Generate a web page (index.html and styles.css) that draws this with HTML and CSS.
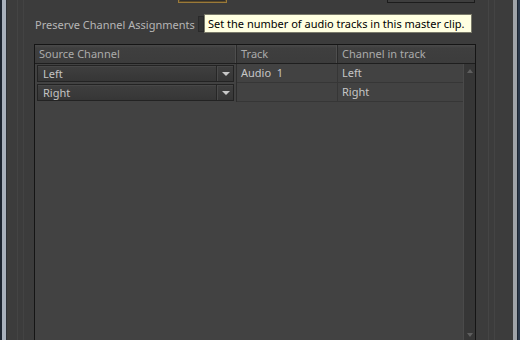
FILE: index.html
```html
<!DOCTYPE html>
<html>
	<head>
		<meta charset="utf-8"/>
		<title>Modify Clip - Audio Channels</title>
		<link rel="stylesheet" href="styles.css">
	</head>
	<body>
		<div class="edgeLeft"></div>
		<div id="dialog">
			<div class="topStrip">
				<div class="numField"></div>
				<div class="topButton"></div>
			</div>
			<div class="optionRow">
				<span class="optionLabel">Preserve Channel Assignments</span>
				<span class="checkBox"></span>
			</div>
			<div class="tooltip">Set the number of audio tracks in this master clip.</div>

			<div id="channelTable">
				<div class="tableHead">
					<div class="headCell">Source Channel</div>
					<div class="headCell">Track</div>
					<div class="headCell last">Channel in track</div>
				</div>
				<div class="tableBody">
					<div class="rows">
						<div class="row">
							<div class="cell srcCell">
								<div class="dropDown"><span>Left</span><span class="ddArrow"></span></div>
							</div>
							<div class="cell">Audio&nbsp; 1</div>
							<div class="cell">Left</div>
						</div>
						<div class="row">
							<div class="cell srcCell">
								<div class="dropDown"><span>Right</span><span class="ddArrow"></span></div>
							</div>
							<div class="cell"></div>
							<div class="cell">Right</div>
						</div>
					</div>
					<div class="scrollBar">
						<span class="sbUp"></span>
						<span class="sbDown"></span>
					</div>
				</div>
			</div>
		</div>
		<div class="edgeRight"></div>
	</body>
</html>
```

FILE: styles.css
```css
/*main layout*/
body{
	margin: 0;
	height: 340px;
	overflow: hidden;
	display: flex;
	background-color: #3c3c3c;
	font-family: "Noto Sans", "Liberation Sans", sans-serif;
	font-size: 11px;
	color: #c4c4c4;
}
.edgeLeft{
	width: 7px;
	background: linear-gradient(to right, #1b2430 0 2px, #a7b0bc 2px 6px, #2c3138 6px 7px);
}
.edgeRight{
	width: 7px;
	background: linear-gradient(to right, #9fa3a8 0 4px, #1c2531 4px 5px, #2c3a4c 5px);
}
#dialog{
	flex: 1;
	position: relative;
	display: flex;
	flex-direction: column;
	padding-left: 27px;
	/*faint panel lines*/
	background:
		linear-gradient(to right, transparent 10px, #444 10px 11px, transparent 11px 16px, #434343 16px 17px, transparent 17px 481px, #454545 481px 482px, transparent 482px 487px, #444 487px 488px, transparent 488px),
		#3c3c3c;
}

/*partly visible controls at the top*/
.topStrip{
	display: flex;
	align-items: flex-end;
	height: 3px;
}
.numField{
	width: 47px;
	height: 18px;
	margin-left: 144px;
	flex-shrink: 0;
	border: 1px solid #9a7a3a;
	background-color: #2e2e2e;
	box-shadow: inset 0 0 0 1px #5a4826;
}
.topButton{
	width: 86px;
	height: 18px;
	margin-left: 160px;
	flex-shrink: 0;
	border: 1px solid #1c1c1c;
	background-color: #3e3e3e;
}

.optionRow{
	display: flex;
	align-items: center;
	height: 20px;
	margin-top: 11px;
	padding-left: 1px;
}
.optionLabel{
	color: #b6b6b6;
	width: 163px;
}
.checkBox{
	width: 4px;
	height: 14px;
	border: 1px solid #2a2a2a;
	background-color: #333;
}
.tooltip{
	position: absolute;
	left: 197px;
	top: 14px;
	width: 263px;
	height: 17px;
	padding-left: 3px;
	border: 1px solid #7a7a6a;
	background-color: #ffffe1;
	color: #000;
	font-size: 11px;
	line-height: 17px;
	white-space: nowrap;
}

/*table*/
#channelTable{
	width: 440px;
	flex: 1;
	margin-top: 10px;
	border: 1px solid #151515;
	border-bottom: none;
	display: flex;
	flex-direction: column;
	background-color: #424242;
}
.tableHead{
	display: grid;
	grid-template-columns: 202px 101px 137px;
	height: 18px;
	border-bottom: 1px solid #1e1e1e;
	background: linear-gradient(#4a4a4a, #3f3f3f 3px, #3c3c3c);
}
.headCell{
	padding-left: 4px;
	line-height: 18px;
	color: #ababab;
	border-right: 1px solid #2a2a2a;
	box-shadow: inset -1px 0 0 #4e4e4e;
}
.headCell.last{
	border-right: none;
	box-shadow: none;
}
.tableBody{
	flex: 1;
	display: flex;
}
.rows{
	flex: 1;
}
.row{
	display: grid;
	grid-template-columns: 202px 101px 125px;
	height: 19px;
}
.cell{
	padding-left: 4px;
	line-height: 18px;
	border-bottom: 1px solid #363636;
	border-right: 1px solid #363636;
	color: #c6c6c6;
}
.row .cell:last-child{
	border-right: none;
}
.srcCell{
	padding: 0 2px;
	border-bottom: none;
	border-right-color: #2e2e2e;
}
.dropDown{
	display: flex;
	justify-content: space-between;
	height: 15px;
	margin-top: 1px;
	border: 1px solid #232323;
	background: linear-gradient(#3f3f3f, #363636);
	box-shadow: inset 0 1px 0 #474747;
	padding-left: 5px;
	line-height: 15px;
	color: #c4c4c4;
}
.ddArrow{
	width: 16px;
	border-left: 1px solid #262626;
	box-shadow: inset 1px 0 0 #4a4a4a;
	position: relative;
}
.ddArrow::after{
	content: "";
	position: absolute;
	left: 5px;
	top: 6px;
	border-left: 4px solid transparent;
	border-right: 4px solid transparent;
	border-top: 4px solid #c8c8c8;
}
.scrollBar{
	width: 11px;
	border-left: 1px solid #4a4a4a;
	background-color: #363636;
	display: flex;
	flex-direction: column;
	justify-content: space-between;
	align-items: center;
	padding: 5px 0 3px 0;
}
.sbUp{
	border-left: 3px solid transparent;
	border-right: 3px solid transparent;
	border-bottom: 4px solid #5e5e5e;
}
.sbDown{
	border-left: 3px solid transparent;
	border-right: 3px solid transparent;
	border-top: 4px solid #5e5e5e;
}
```
